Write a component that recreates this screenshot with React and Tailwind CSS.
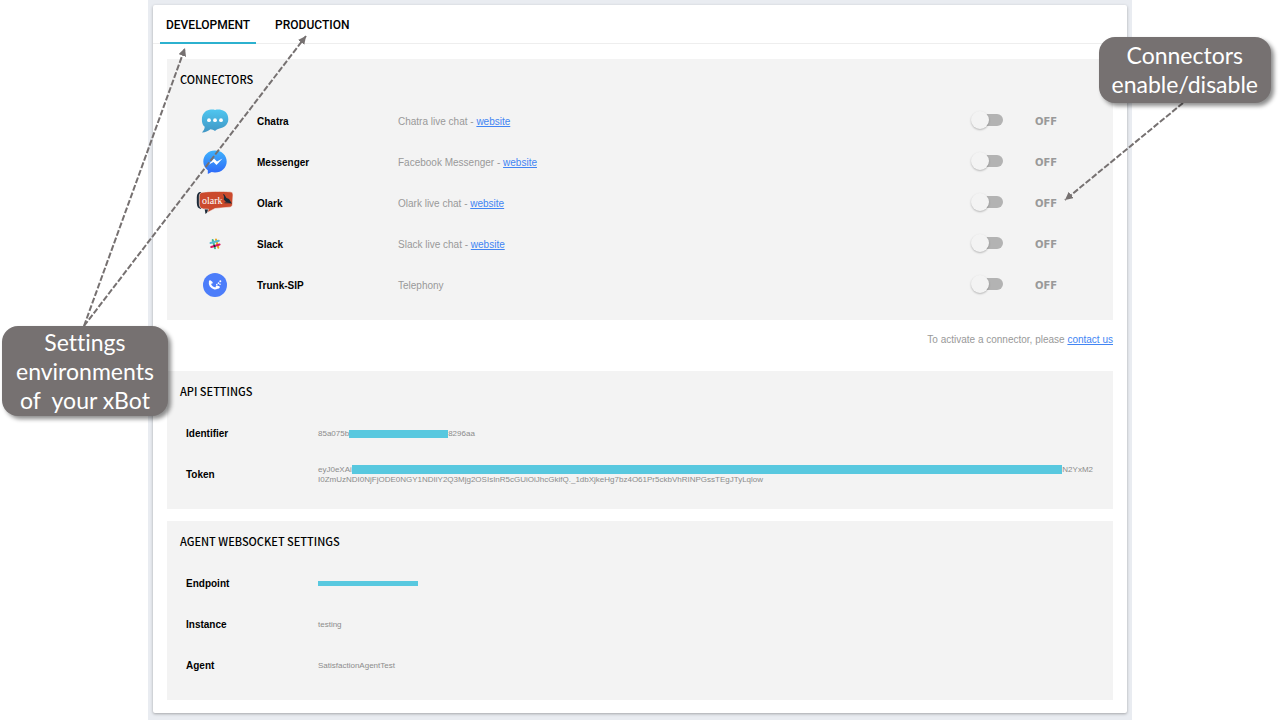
import React from "react";
import { useState } from "react";

const ChatraIcon = () => (
  <svg width="28" height="24" viewBox="0 0 28 24" aria-hidden="true">
    <defs>
      <linearGradient id="chatra" x1="0" y1="0" x2="0" y2="1">
        <stop offset="0" stopColor="#4fc6f0" />
        <stop offset="1" stopColor="#4096c4" />
      </linearGradient>
    </defs>
    <path
      d="M8.500.8C10.500.3 12.500.3 14 .9C16 .3 18.500.3 20.500.9C25 1.800 27.400 5.500 27.300 10.500C27 16 23 18.600 18.500 19.500C16.500 20 15 21 14 22C12.500 20.800 11 20.300 9.500 20.200C7 22.300 4 23.500 1 23.400C2.600 21.800 3.700 20 3.700 17.800C1.700 16.200.8 13.500.9 10.500C.9 5.300 4 1.500 8.500.8Z"
      fill="url(#chatra)"
    />
    <circle cx="8" cy="11.200" r="1.900" fill="#fff" />
    <circle cx="14" cy="11.200" r="1.900" fill="#fff" />
    <circle cx="20" cy="11.200" r="1.900" fill="#fff" />
  </svg>
);

const MessengerIcon = () => (
  <svg width="24" height="24" viewBox="0 0 24 24" aria-hidden="true">
    <defs>
      <linearGradient id="messenger" x1="0" y1="0" x2="0" y2="1">
        <stop offset="0" stopColor="#3fb2fc" />
        <stop offset="1" stopColor="#2d67f8" />
      </linearGradient>
    </defs>
    <path
      d="M12 .5C5.300.5.300 5.300.300 11.500C.300 15 1.900 18 4.800 20.200V24L8.600 22C9.700 22.300 10.800 22.500 12 22.500C18.700 22.500 23.700 17.700 23.700 11.500C23.700 5.300 18.700.5 12 .5Z"
      fill="url(#messenger)"
    />
    <path d="M5 15L11 8.500L14 11.500L19.500 8.500L13.500 15L10.500 12Z" fill="#fff" />
  </svg>
);

const OlarkIcon = () => (
  <svg width="38" height="24" viewBox="0 0 38 24" aria-hidden="true">
    <path d="M5 1C2 1 1 3 .8 6V12C.9 15.500 2 17.500 5 18Z" fill="#1c2a38" />
    <path d="M8.500 17L9.500 23L15 18Z" fill="#1c2a38" />
    <path
      d="M7 1.200C13 .3 26 .2 34 .8C36.500 1 37 2.200 37 4L36.500 13C36.300 15.200 35.500 16 33.500 16.200L19 17.500L11.500 21.500L12.500 18.200L7.500 18C4.500 17.800 3.500 16 3.300 13V5C3.400 2.500 4.500 1.500 7 1.200Z"
      fill="#cb4a2d"
      stroke="#f3f3f3"
      strokeWidth=".6"
    />
    <text
      x="6"
      y="13"
      fontSize="10"
      fontFamily="'Liberation Serif', serif"
      fill="#fff"
    >
      olark
    </text>
    <path
      d="M27 3L28.300 3.400L30.500 7L33 8L36 12.800L32.500 11.800L30 11L27.800 8.500L28 5.500Z"
      fill="#1c2a38"
    />
    <path d="M28.500 11.800H34" stroke="#1c2a38" strokeWidth=".8" />
  </svg>
);

const SlackIcon = () => (
  <svg width="12" height="12" viewBox="0 0 12 12" aria-hidden="true">
    <g strokeWidth="2" strokeLinecap="round" fill="none">
      <path d="M3.700 2L6 10.300" stroke="#3eb991" />
      <path d="M7 1.500L9.300 9.700" stroke="#e9a820" />
      <path d="M1.500 5L9.800 2.800" stroke="#56b8d0" />
      <path d="M2.200 9L10.600 6.500" stroke="#d8195f" />
    </g>
    <path d="M5 7.200L6 9" stroke="#3a1538" strokeWidth="1.500" />
  </svg>
);

const TrunkSipIcon = () => (
  <svg width="24" height="24" viewBox="0 0 24 24" aria-hidden="true">
    <circle cx="12" cy="12" r="12" fill="#4c7dfa" />
    <path
      d="M7 8.800C6.300 11.800 8.200 14.800 11.600 15.300C13 15.500 14.300 15 15.500 14.200"
      fill="none"
      stroke="#fff"
      strokeWidth="2.200"
      strokeLinecap="round"
    />
    <path
      d="M7 8.500L8.600 9.700M13.800 13.600L15.500 14.300"
      fill="none"
      stroke="#fff"
      strokeWidth="2.200"
      strokeLinecap="round"
    />
    <g fill="#fff">
      <circle cx="13.800" cy="11.600" r=".8" />
      <circle cx="15.500" cy="10.200" r=".9" />
      <circle cx="17.300" cy="8.300" r="1" />
      <circle cx="17" cy="11.300" r=".8" />
    </g>
  </svg>
);

const connectors = [
  { name: "Chatra", description: "Chatra live chat", website: true, Icon: ChatraIcon },
  { name: "Messenger", description: "Facebook Messenger", website: true, Icon: MessengerIcon },
  { name: "Olark", description: "Olark live chat", website: true, Icon: OlarkIcon },
  { name: "Slack", description: "Slack live chat", website: true, Icon: SlackIcon },
  { name: "Trunk-SIP", description: "Telephony", website: false, Icon: TrunkSipIcon },
];

const Panel = ({ title, children }) => (
  <section className="bg-[#f3f3f3] pb-[14px]">
    <h2 className="mb-[2px] flex h-10 items-center pl-[13px] font-['Noto_Sans_CJK_SC',sans-serif] text-[11px] leading-4 font-medium text-black">
      {title}
    </h2>
    {children}
  </section>
);

const Setting = ({ label, children }) => (
  <div className="flex h-[41px] items-center pr-5 pl-[19px]">
    <dt className="w-[132px] shrink-0 text-[10px] font-bold text-black">
      {label}
    </dt>
    <dd className="min-w-0 flex-1 text-[8px] leading-[10px] text-[#8c8c8c]">
      {children}
    </dd>
  </div>
);

const Callout = ({ className, children }) => (
  <div
    className={`absolute rounded-2xl bg-[#767171] text-center font-[Lato,sans-serif] text-[23px] leading-[29px] whitespace-pre-line text-white shadow-[3px_3px_4px_rgba(0,0,0,0.45)] [font-variant-ligatures:none] ${className}`}
  >
    {children}
  </div>
);

const Arrows = () => (
  <svg
    className="pointer-events-none absolute top-0 left-0"
    width="1280"
    height="720"
    viewBox="0 0 1280 720"
    aria-hidden="true"
  >
    <defs>
      <marker
        id="head"
        viewBox="0 0 8 8"
        refX="8"
        refY="4"
        markerWidth="8"
        markerHeight="8"
        markerUnits="userSpaceOnUse"
        orient="auto"
      >
        <path d="M0 0L8 4L0 8Z" fill="#767171" />
      </marker>
    </defs>
    <g
      stroke="#767171"
      strokeWidth="2"
      strokeDasharray="6 2"
      fill="none"
      markerEnd="url(#head)"
    >
      <path d="M84 326L185 48" />
      <path d="M84 326L306 36" />
      <path d="M1183 103L1065 200" />
    </g>
  </svg>
);

const App = () => {
  const [environment, setEnvironment] = useState("DEVELOPMENT");
  const [enabled, setEnabled] = useState({});

  return (
    <div className="min-h-screen bg-white font-['Liberation_Sans',Arial,sans-serif]">
      <div className="relative mx-auto max-w-[1280px]">
        <main className="mx-auto max-w-[984px] bg-[#e9ecf1] px-[5px] pt-[5px] pb-[7px]">
          <div className="rounded-xs bg-white shadow-[0_1px_3px_rgba(0,0,0,0.3)]">
            <nav className="flex h-[39px] gap-[13px] border-b border-[#eee] px-[7px]">
              {["DEVELOPMENT", "PRODUCTION"].map((tab) => (
                <button
                  key={tab}
                  type="button"
                  onClick={() => setEnvironment(tab)}
                  className={`-mb-px border-b-2 px-[6px] pt-[2px] font-[Roboto,sans-serif] text-[12px] leading-4 font-medium text-black ${
                    environment === tab
                      ? "border-[#2cb1cf]"
                      : "border-transparent"
                  }`}
                >
                  {tab}
                </button>
              ))}
            </nav>
            <div className="px-[14px] pt-[15px] pb-[13px]">
              <Panel title="CONNECTORS">
                <table className="w-full table-fixed text-left text-[10px]">
                  <tbody>
                    {connectors.map(({ name, description, website, Icon }) => (
                      <tr key={name} className="h-[41px]">
                        <td className="w-[90px] pr-3 pb-[2px] pl-[18px]">
                          <div className="flex justify-center">
                            <Icon />
                          </div>
                        </td>
                        <th className="w-[141px] font-bold text-black">
                          <label htmlFor={name}>{name}</label>
                        </th>
                        <td className="text-[#999]">
                          {description}
                          {website && (
                            <>
                              {" - "}
                              <a href="#website" className="text-[#4285f4] underline">
                                website
                              </a>
                            </>
                          )}
                        </td>
                        <td className="w-[65px] pb-[3px] pl-[6px]">
                          <input
                            id={name}
                            type="checkbox"
                            checked={!!enabled[name]}
                            onChange={(e) =>
                              setEnabled({ ...enabled, [name]: e.target.checked })
                            }
                            className="relative block h-3 w-[27px] appearance-none rounded-full bg-[#b3b3b3] before:absolute before:-top-[3px] before:-left-[5px] before:size-[18px] before:rounded-full before:bg-[#f3f3f3] before:shadow-[0_1px_2px_rgba(0,0,0,0.25)] checked:bg-[#8fd3e3] checked:before:left-[14px]"
                          />
                        </td>
                        <td className="w-[78px] font-['DejaVu_Sans',Verdana,sans-serif] font-bold text-[#999]">
                          {enabled[name] ? "ON" : "OFF"}
                        </td>
                      </tr>
                    ))}
                  </tbody>
                </table>
              </Panel>
              <p className="pt-3 pb-6 text-right text-[10px] leading-[15px] text-[#999]">
                To activate a connector, please{" "}
                <a href="#contact" className="text-[#4285f4] underline">
                  contact us
                </a>
              </p>
              <div className="flex flex-col gap-3">
                <Panel title="API SETTINGS">
                  <dl>
                    <Setting label="Identifier">
                      <span className="flex items-center">
                        85a075b
                        <span className="h-2 w-[99px] bg-[#58c8df]" />
                        8296aa
                      </span>
                    </Setting>
                    <Setting label="Token">
                      <span className="flex items-center">
                        eyJ0eXAi
                        <span className="h-[9px] flex-1 bg-[#58c8df]" />
                        N2YxM2
                      </span>
                      I0ZmUzNDI0NjFjODE0NGY1NDIiY2Q3Mjg2OSIsInR5cGUiOiJhcGkifQ._1dbXjkeHg7bz4O61Pr5ckbVhRINPGssTEgJTyLqlow
                    </Setting>
                  </dl>
                </Panel>
                <Panel title="AGENT WEBSOCKET SETTINGS">
                  <dl>
                    <Setting label="Endpoint">
                      <span className="block h-[5px] w-[100px] bg-[#58c8df]" />
                    </Setting>
                    <Setting label="Instance">testing</Setting>
                    <Setting label="Agent">SatisfactionAgentTest</Setting>
                  </dl>
                </Panel>
              </div>
            </div>
          </div>
        </main>

        <Arrows />
        <Callout className="top-[37px] right-[9px] px-[13px] pt-1 pb-1">
          {"Connectors\nenable/disable"}
        </Callout>
        <Callout className="top-[326px] left-[2px] px-[14px] pt-[2px] pb-px">
          {"Settings\nenvironments\nof \u00a0your xBot"}
        </Callout>
      </div>
    </div>
  );
};

export default App;
